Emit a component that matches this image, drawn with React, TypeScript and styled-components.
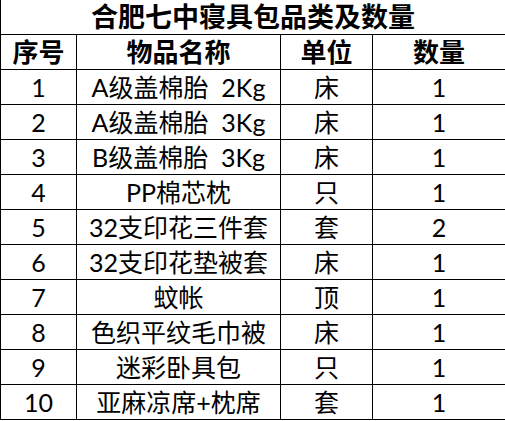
import React from 'react';
import styled, { createGlobalStyle } from 'styled-components';

const GlobalStyle = createGlobalStyle`
  html, body {
    margin: 0;
    padding: 0;
    background: #ffffff;
  }
`;

const items = [
  { no: '1', name: 'A级盖棉胎  2Kg', unit: '床', qty: '1' },
  { no: '2', name: 'A级盖棉胎  3Kg', unit: '床', qty: '1' },
  { no: '3', name: 'B级盖棉胎  3Kg', unit: '床', qty: '1' },
  { no: '4', name: 'PP棉芯枕', unit: '只', qty: '1' },
  { no: '5', name: '32支印花三件套', unit: '套', qty: '2' },
  { no: '6', name: '32支印花垫被套', unit: '床', qty: '1' },
  { no: '7', name: '蚊帐', unit: '顶', qty: '1' },
  { no: '8', name: '色织平纹毛巾被', unit: '床', qty: '1' },
  { no: '9', name: '迷彩卧具包', unit: '只', qty: '1' },
  { no: '10', name: '亚麻凉席+枕席', unit: '套', qty: '1' },
];

const App = () => {
  return (
    <>
      <GlobalStyle />
      <Sheet>
        <colgroup>
          <col style={{ width: 76 }} />
          <col style={{ width: 204 }} />
          <col style={{ width: 92 }} />
          <col style={{ width: 133 }} />
        </colgroup>
        <thead>
          <tr>
            <Title colSpan={4}>合肥七中寝具包品类及数量</Title>
          </tr>
          <tr>
            <Head>序号</Head>
            <Head>物品名称</Head>
            <Head>单位</Head>
            <Head>数量</Head>
          </tr>
        </thead>
        <tbody>
          {items.map((item) => (
            <tr key={item.no}>
              <Cell>{item.no}</Cell>
              <Cell>{item.name}</Cell>
              <Cell>{item.unit}</Cell>
              <Cell>{item.qty}</Cell>
            </tr>
          ))}
        </tbody>
      </Sheet>
    </>
  );
};

const Sheet = styled.table`
  width: 505px;
  table-layout: fixed;
  border-collapse: collapse;
  font-family: Lato, "Noto Sans CJK SC", sans-serif;
  color: #000000;
`;

const Title = styled.th`
  height: 34px;
  padding: 0;
  border: 1px solid #000000;
  border-top: none;
  font-size: 27px;
  font-weight: bold;
  text-align: center;
  line-height: 34px;
`;

const Head = styled.th`
  height: 34px;
  padding: 0;
  border: 1px solid #000000;
  font-size: 26px;
  font-weight: bold;
  text-align: center;
  line-height: 34px;
`;

const Cell = styled.td`
  height: 34px;
  padding: 0;
  border: 1px solid #000000;
  font-size: 25px;
  font-weight: normal;
  text-align: center;
  line-height: 34px;
  white-space: pre;
`;

export default App;
